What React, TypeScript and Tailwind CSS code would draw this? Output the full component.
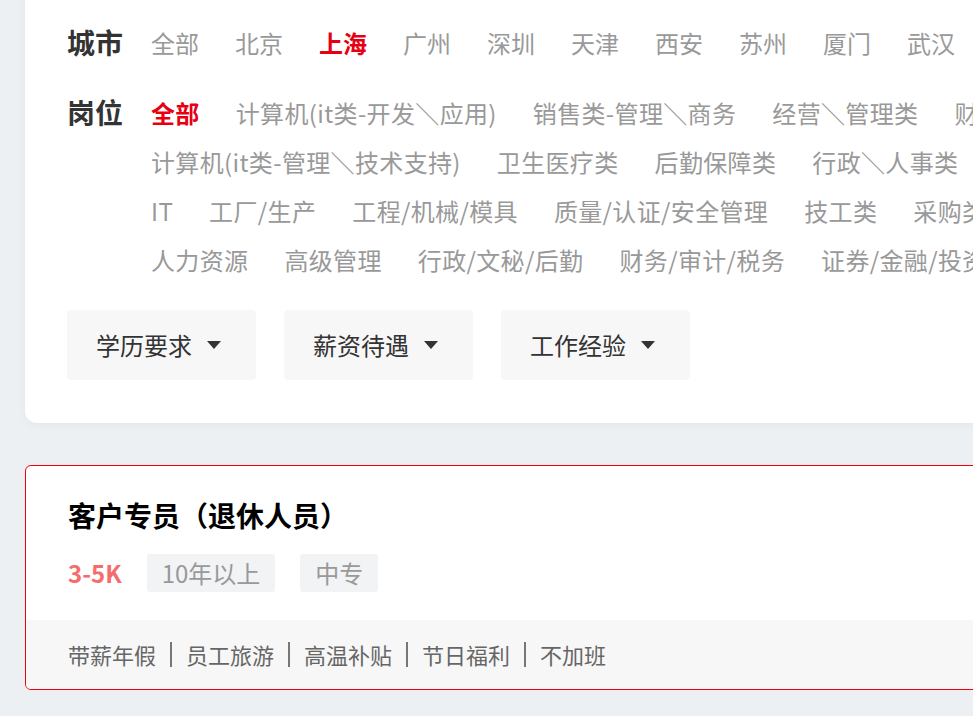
import React from "react";

const cities = ["全部", "北京", "上海", "广州", "深圳", "天津", "西安", "苏州", "厦门", "武汉", "成都"];

const jobLines = [
  ["全部", "计算机(it类-开发＼应用)", "销售类-管理＼商务", "经营＼管理类", "财务＼会计类"],
  ["计算机(it类-管理＼技术支持)", "卫生医疗类", "后勤保障类", "行政＼人事类"],
  ["IT", "工厂/生产", "工程/机械/模具", "质量/认证/安全管理", "技工类", "采购类"],
  ["人力资源", "高级管理", "行政/文秘/后勤", "财务/审计/税务", "证券/金融/投资"],
];

const filters = ["学历要求", "薪资待遇", "工作经验"];

const welfare = ["带薪年假", "员工旅游", "高温补贴", "节日福利", "不加班"];

function Caret() {
  return (
    <svg width="14" height="8" viewBox="0 0 14 8" className="shrink-0">
      <path d="M0 0h14L7 8z" fill="#333" />
    </svg>
  );
}

function Item({ label, active, wide }: { label: string; active?: boolean; wide?: boolean }) {
  const base = wide ? "shrink-0 whitespace-nowrap tracking-[0.35px]" : "shrink-0 whitespace-nowrap";
  return (
    <span className={active ? `${base} font-bold text-[#e60012]` : `${base} text-[#999]`}>
      {label}
    </span>
  );
}

export default function App() {
  return (
    <div className="h-screen w-screen overflow-hidden bg-[#edf0f3] font-['Noto_Sans_CJK_SC',sans-serif]">
      <div className="-mt-[25px] ml-[25px] w-[1150px]">
        <section className="rounded-[12px] bg-white py-[43px] pl-[42px] pr-[43px] shadow-[0_2px_10px_rgba(0,0,0,0.04)]">
          <div className="flex">
            <div className="w-[84px] shrink-0 text-[28px] font-bold leading-[49px] text-[#333]">城市</div>
            <div className="flex gap-x-[36px] text-[24px] leading-[49px]">
              {cities.map((c) => (
                <Item key={c} label={c} active={c === "上海"} />
              ))}
            </div>
          </div>

          <div className="mt-[21px] flex">
            <div className="w-[84px] shrink-0 text-[28px] font-bold leading-[49px] text-[#333]">岗位</div>
            <div className="flex flex-col text-[24px] leading-[49px]">
              {jobLines.map((line, i) => (
                <div key={i} className="flex gap-x-[36px]">
                  {line.map((j) => (
                    <Item key={j} label={j} wide active={i === 0 && j === "全部"} />
                  ))}
                </div>
              ))}
            </div>
          </div>

          <div className="mt-[26px] flex gap-[28px]">
            {filters.map((f) => (
              <button
                key={f}
                className="flex h-[70px] w-[189px] items-center gap-[15px] rounded-[4px] bg-[#f7f7f7] pl-[29px] text-[24px] text-[#333]"
              >
                <span>{f}</span>
                <Caret />
              </button>
            ))}
          </div>
        </section>

        <article className="mt-[42px] overflow-hidden rounded-[6px] border border-[#f0000f] bg-white">
          <div className="px-[42px] pb-[28px] pt-[29px]">
            <h2 className="text-[28px] font-bold leading-[40px] text-black">客户专员（退休人员）</h2>
            <div className="mt-[19px] flex items-center gap-[25px]">
              <span className="text-[24px] font-bold leading-[38px] text-[#f56c6c]">3-5K</span>
              <span className="h-[38px] rounded-[3px] bg-[#f2f3f5] px-[15px] text-[24px] leading-[38px] text-[#999]">
                10年以上
              </span>
              <span className="h-[38px] rounded-[3px] bg-[#f2f3f5] px-[15px] text-[24px] leading-[38px] text-[#999]">
                中专
              </span>
            </div>
          </div>
          <div className="flex h-[69px] items-center bg-[#f7f7f7] px-[42px] text-[22px] text-[#666]">
            {welfare.map((w, i) => (
              <React.Fragment key={w}>
                {i > 0 && (
                  <span className="flex w-[30px] justify-center">
                    <span className="block h-[25px] w-[2px] bg-[#777]" />
                  </span>
                )}
                <span>{w}</span>
              </React.Fragment>
            ))}
          </div>
        </article>
      </div>
    </div>
  );
}
